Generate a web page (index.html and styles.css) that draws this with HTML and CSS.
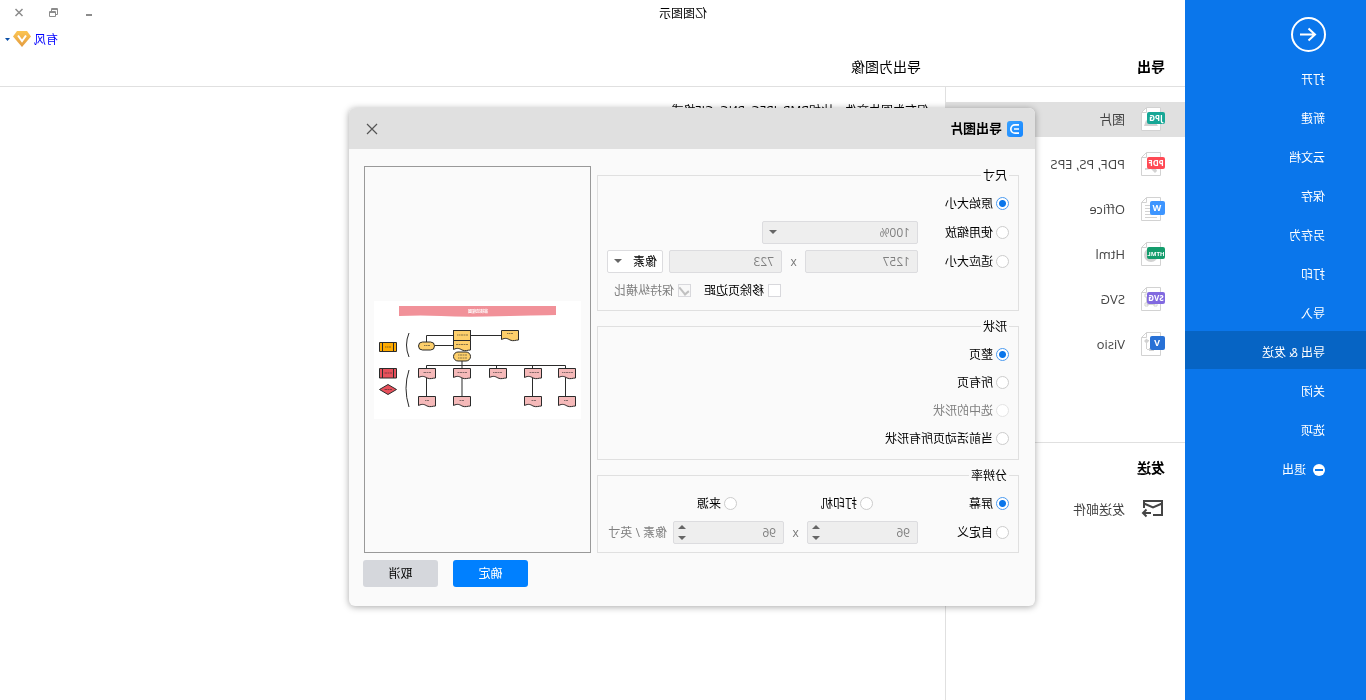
FILE: index.html
```html
<!DOCTYPE html>
<html lang="zh-CN">
<head>
<meta charset="utf-8">
<title>亿图图示</title>
<link rel="stylesheet" href="styles.css">
</head>
<body>
<svg class="defs" width="0" height="0" aria-hidden="true">
  <defs>
    <g id="page"><path d="M4.500 .5H18.500L23.500 5.500V23.500H4.500Z" fill="#fff" stroke="#d2d2d2"/><path d="M18.500 .5V5.500H23.500" fill="none" stroke="#d2d2d2"/></g>
    <path id="doc" d="M0 0H17V9C13 7 11 8 8.500 9.500C5 11 3 9.500 0 9.500Z" stroke="#2b2b2b"/>
  </defs>
</svg>
<div class="app">
  <header class="titlebar">
    <h1 class="app-title">亿图图示</h1>
    <div class="window-buttons">
      <button type="button" aria-label="最小化"><svg width="10" height="10"><path d="M2 7H8" stroke="#8c8c8c" stroke-width="2"/></svg></button>
      <button type="button" aria-label="还原"><svg width="10" height="10" fill="none" stroke="#8c8c8c"><path d="M7.500 3V.5H1.500V6.500H3M1 1.500H8"/><path d="M3.500 3.500H9.500V8.500H3.500ZM3 4.500H9"/></svg></button>
      <button type="button" aria-label="关闭"><svg width="10" height="10"><path d="M1.500 1L8.500 8M8.500 1L1.500 8" stroke="#8c8c8c" stroke-width="1.500"/></svg></button>
    </div>
  </header>

  <nav class="sidebar">
    <button class="back" type="button" aria-label="返回"><svg width="35" height="35" fill="none" stroke="#fff" stroke-width="2"><circle cx="17.500" cy="17.500" r="16.500"/><path d="M26 17.500H10.500M17.500 11.500L11 17.500L17.500 23.500"/></svg></button>
    <a class="nav-item" href="#">打开</a>
    <a class="nav-item" href="#">新建</a>
    <a class="nav-item" href="#">云文档</a>
    <a class="nav-item" href="#">保存</a>
    <a class="nav-item" href="#">另存为</a>
    <a class="nav-item" href="#">打印</a>
    <a class="nav-item" href="#">导入</a>
    <a class="nav-item active" href="#">导出 &amp; 发送</a>
    <a class="nav-item" href="#">关闭</a>
    <a class="nav-item" href="#">选项</a>
    <a class="nav-item" href="#"><svg width="12" height="12"><circle cx="6" cy="6" r="6" fill="#fff"/><path d="M2 6H10" stroke="#0a76eb" stroke-width="2"/></svg>退出</a>
  </nav>

  <div class="workspace">
    <div class="account">
      <a href="#">有风</a>
      <svg width="18" height="16"><defs><linearGradient id="gold" x2="0" y2="1"><stop stop-color="#fcc552"/><stop offset="1" stop-color="#e29a3f"/></linearGradient></defs><path d="M4 0H14L18 5.500L9 16L0 5.500Z" fill="url(#gold)"/><path d="M5 4.500L9 10L13 4.500" fill="none" stroke="#fff" stroke-width="2"/></svg>
      <svg width="5" height="3"><path d="M0 0H5L2.500 3Z" fill="#0b4fa8"/></svg>
    </div>
    <div class="headings">
      <h2 class="strong">导出</h2>
      <h2>导出为图像</h2>
    </div>
    <div class="columns">
      <aside class="formats">
        <ul class="format-list">
          <li class="format selected"><svg width="24" height="24"><use href="#page"/><path d="M7 19L11 13L15 16L19 13L21 19Z" fill="#d2d2d2"/><rect y="5" width="18" height="12" rx="2" fill="#17a796"/><text x="9" y="14" class="badge">JPG</text></svg>图片</li>
          <li class="format"><svg width="24" height="24"><use href="#page"/><path d="M8 19Q9 15 14 16L20 16L20 18L14 17L10 21Z" fill="#d2d2d2"/><rect y="5" width="18" height="12" rx="2" fill="#ff4a55"/><text x="9" y="14" class="badge">PDF</text></svg>PDF, PS, EPS</li>
          <li class="format"><svg width="24" height="24"><use href="#page"/><path d="M13 8.500H20M13 11.500H20M13 14.500H20M8 17.500H20M8 20.500H20" stroke="#d2d2d2"/><rect y="4" width="15" height="14" rx="2" fill="#3d95ff"/><text x="8" y="14" class="badge big">W</text></svg>Office</li>
          <li class="format"><svg width="24" height="24"><use href="#page"/><circle cx="14" cy="13" r="7" fill="#d2d2d2"/><rect y="5" width="18" height="12" rx="2" fill="#149c6c"/><text x="9" y="14" class="badge small">HTML</text></svg>Html</li>
          <li class="format"><svg width="24" height="24"><use href="#page"/><path d="M9.500 17.500H18.500M8 16H11V19H8ZM17 16H20V19H17ZM17 7H20V10H17Z M18.500 10V16" fill="none" stroke="#d2d2d2"/><rect y="5" width="18" height="12" rx="2" fill="#8169e0"/><text x="9" y="14" class="badge">SVG</text></svg>SVG</li>
          <li class="format"><svg width="24" height="24"><use href="#page"/><path d="M16 8.500H20M18.500 8V17M14 17.500H18" fill="none" stroke="#d2d2d2"/><path d="M16 9L18.500 6.500L21 9L18.500 11.500ZM11 16H16V19H11Z" fill="#d2d2d2"/><rect y="4" width="15" height="14" rx="2" fill="#2871d6"/><text x="8" y="14" class="badge big">V</text></svg>Visio</li>
        </ul>
        <section class="send">
          <h2 class="strong">发送</h2>
          <div class="format"><svg width="24" height="24" fill="none" stroke="#444" stroke-width="2"><path d="M12 18H3V4H21V11"/><path d="M3 6.500L12 10.500L21 6.500"/><path d="M14 16H21M18.500 12.500L22 16L18.500 19.500"/></svg>发送邮件</div>
        </section>
      </aside>
      <main class="content">
        <p>保存为图片文件，比如BMP, JPEG, PNG, GIF格式</p>
      </main>
    </div>
  </div>

  <form class="dialog" role="dialog" aria-labelledby="dialog-title">
    <div class="dialog-bar">
      <svg width="16" height="16"><defs><linearGradient id="blue" x1="1" y2="1" x2="0"><stop stop-color="#38a1ff"/><stop offset="1" stop-color="#1686ff"/></linearGradient></defs><rect width="16" height="16" rx="3" fill="url(#blue)"/><path d="M4 3.800H8A4.200 4.200 0 0 1 8 12.200H4M4 8H9" fill="none" stroke="#fff" stroke-width="1.700"/></svg>
      <h2 id="dialog-title">导出图片</h2>
      <button class="close" type="button" aria-label="关闭"><svg width="12" height="12"><path d="M1 1L11 11M11 1L1 11" stroke="#555" stroke-width="1.200"/></svg></button>
    </div>
    <div class="dialog-body">
      <div class="settings">
        <fieldset class="size">
          <legend>尺寸</legend>
          <div class="row"><label class="option"><input type="radio" name="size" checked>原始大小</label></div>
          <div class="row">
            <label class="option"><input type="radio" name="size">使用缩放</label>
            <span class="drop scale"><select disabled aria-label="缩放比例"><option>100%</option></select></span>
          </div>
          <div class="row">
            <label class="option"><input type="radio" name="size">适应大小</label>
            <input class="field" type="text" value="1257" disabled aria-label="宽度">
            <span class="times">x</span>
            <input class="field" type="text" value="723" disabled aria-label="高度">
            <span class="drop unit"><select aria-label="单位"><option>像素</option></select></span>
          </div>
          <div class="row checks">
            <label><input type="checkbox">移除页边距</label>
            <label class="muted"><input type="checkbox" checked disabled>保持纵横比</label>
          </div>
        </fieldset>
        <fieldset class="shapes">
          <legend>形状</legend>
          <label class="option"><input type="radio" name="shape" checked>整页</label>
          <label class="option"><input type="radio" name="shape">所有页</label>
          <label class="option muted"><input type="radio" name="shape" disabled>选中的形状</label>
          <label class="option"><input type="radio" name="shape">当前活动页所有形状</label>
        </fieldset>
        <fieldset class="size">
          <legend>分辨率</legend>
          <div class="row devices">
            <label class="option"><input type="radio" name="dpi" checked>屏幕</label>
            <label class="option"><input type="radio" name="dpi">打印机</label>
            <label class="option"><input type="radio" name="dpi">来源</label>
          </div>
          <div class="row">
            <label class="option"><input type="radio" name="dpi">自定义</label>
            <span class="spin"><input class="field" type="text" value="96" disabled aria-label="水平分辨率"></span>
            <span class="times">x</span>
            <span class="spin"><input class="field" type="text" value="96" disabled aria-label="垂直分辨率"></span>
            <span class="muted per-inch">像素 / 英寸</span>
          </div>
        </fieldset>
      </div>
      <div class="preview">
        <svg class="diagram" viewBox="0 0 207 118" role="img" aria-label="预览">
          <rect width="207" height="118" fill="#fff"/>
          <path d="M25 5H182V15Q160 14 140 15T95 15.500T50 14.500T25 14Z" fill="#f19199"/>
          <text x="103" y="12" class="banner-text">审核流程图</text>
          <g fill="none" stroke="#2b2b2b">
            <path d="M79 34.500H154.500V41M128 44.500H146M119 60V67M15.500 67V64.500H154.500V67M84.500 64.500V67M48.500 64.500V67"/>
            <path d="M15.500 76V95M48.500 76V95M119 76V95M154.500 76V95"/>
            <path d="M172 32Q177 44 172 56M172 69Q178 87 172 106"/>
          </g>
          <g fill="#fdcf6b" stroke="#2b2b2b">
            <rect x="110.500" y="29.500" width="17" height="10"/>
            <use href="#doc" x="110.500" y="39.500"/>
            <use href="#doc" x="62.500" y="29.500"/>
            <rect x="110.500" y="51" width="17" height="9" rx="4.500"/>
            <rect x="146.500" y="41" width="16" height="8" rx="4"/>
          </g>
          <g fill="#f5b9b9">
            <use href="#doc" x="5.500" y="67.500"/><use href="#doc" x="39.500" y="67.500"/><use href="#doc" x="74.500" y="67.500"/><use href="#doc" x="110.500" y="67.500"/><use href="#doc" x="145.500" y="67.500"/>
            <use href="#doc" x="5.500" y="95.500"/><use href="#doc" x="39.500" y="95.500"/><use href="#doc" x="110.500" y="95.500"/><use href="#doc" x="145.500" y="95.500"/>
          </g>
          <path d="M184.500 41.500H201.500V50.500H184.500ZM187.500 41.500V50.500M198.500 41.500V50.500" fill="#ffab00" stroke="#2b2b2b"/>
          <path d="M184.500 67.500H201.500V77H184.500ZM187.500 67.500V77M198.500 67.500V77" fill="#e8505b" stroke="#2b2b2b"/>
          <path d="M193 83.500L201.500 88.500L193 93.500L184.500 88.500Z" fill="#e8505b" stroke="#2b2b2b"/>
          <g stroke="#2b2b2b" stroke-opacity=".55" stroke-dasharray="2 .5">
            <path d="M113 34H124M113 43.500H125M68 32.500H74M114 54H123M114 57H123M151 44.500H157M190 46H196M189 72H197M189 88.500H197"/>
            <path d="M8 71.500H19M42 71.500H52M79 71.500H88M114 71.500H124M150 71.500H158M13 99.500H17M45 99.500H50M117 99.500H122M152 99.500H156"/>
          </g>
        </svg>
      </div>
    </div>
    <div class="dialog-actions">
      <button class="btn primary" type="submit">确定</button>
      <button class="btn" type="button">取消</button>
    </div>
  </form>
</div>
</body>
</html>
```
FILE: styles.css
```css
* { box-sizing: border-box; }

body {
  margin: 0;
  background: #fff;
  color: #000;
  font: 12px/17px "Open Sans", "Noto Sans CJK SC", sans-serif;
}

button, input, select { font: inherit; color: inherit; }
button { border: 0; padding: 0; background: none; }
h1, h2, p, ul { margin: 0; padding: 0; font-size: inherit; font-weight: 400; }
svg { display: block; flex: none; }
.defs { position: absolute; }

/* The whole window is shown flipped left to right. */
.app {
  position: relative;
  display: grid;
  grid-template: 26px 1fr / 181px 1fr;
  min-height: 100vh;
  transform: scaleX(-1);
}

.titlebar {
  grid-area: 1 / 1 / 2 / 3;
  display: grid;
  grid-template-columns: 1fr auto 1fr;
  align-items: center;
  z-index: 1;
}
.app-title { grid-column: 2; }
.window-buttons {
  display: flex;
  justify-content: flex-end;
  gap: 25px;
  padding-right: 14px;
}

.sidebar {
  grid-area: 1 / 1 / 3 / 2;
  display: flex;
  flex-direction: column;
  gap: 1px;
  padding-top: 17px;
  background: #0a76eb;
  color: #fff;
}
.back { align-self: flex-start; margin: 0 0 5px 40px; }
.nav-item {
  display: flex;
  align-items: center;
  gap: 7px;
  height: 38px;
  padding: 5px 0 0 41px;
  color: #fff;
  text-decoration: none;
}
.nav-item.active { background: #0664c4; }

.workspace {
  grid-area: 2 / 2 / 3 / 3;
  display: flex;
  flex-direction: column;
}
.account {
  display: flex;
  align-items: center;
  justify-content: flex-end;
  gap: 3px;
  height: 26px;
  padding-right: 5px;
}
.account a { color: #00f; text-decoration: none; }
.headings {
  display: grid;
  grid-template-columns: 240px 1fr;
  align-items: center;
  height: 35px;
  padding-bottom: 6px;
  border-bottom: 1px solid #e0e0e0;
  font-size: 14px;
}
.headings h2 { padding-left: 20px; }
.headings h2 + h2 { padding-left: 24px; }
.strong { font-weight: 700; }

.columns {
  flex: 1;
  display: grid;
  grid-template-columns: 240px 1fr;
}
.formats {
  padding-top: 15px;
  border-right: 1px solid #e0e0e0;
  font-size: 13px;
  color: #444;
}
.format-list {
  display: flex;
  flex-direction: column;
  gap: 10px;
  list-style: none;
}
.format {
  display: flex;
  align-items: center;
  gap: 16px;
  height: 35px;
  padding: 0 0 1px 20px;
}
.format.selected { background: #e0e0e0; }
.badge {
  fill: #fff;
  font: 700 8px "Open Sans", sans-serif;
  text-anchor: middle;
}
.badge.small { font-size: 6px; }
.badge.big { font-size: 9px; }
.send {
  margin-top: 80px;
  padding-top: 16px;
  border-top: 1px solid #e0e0e0;
}
.send h2 { padding-left: 20px; font-size: 14px; color: #000; }
.send .format { margin-top: 16px; }
.content { padding: 15px 16px; }

.dialog {
  position: absolute;
  top: 108px;
  left: 331px;
  width: 686px;
  max-width: calc(100% - 331px);
  border-radius: 6px;
  background: #fafafa;
  box-shadow: 0 1px 7px rgba(0, 0, 0, .35);
  z-index: 2;
}
.dialog-bar {
  display: flex;
  align-items: center;
  gap: 5px;
  height: 41px;
  padding: 0 17px 0 12px;
  border-radius: 6px 6px 0 0;
  background: #e0e0e0;
}
.dialog-bar h2 { font-size: 13px; font-weight: 700; }
.close { margin-left: auto; }
.dialog-body {
  display: grid;
  grid-template-columns: 1fr 227px;
  gap: 6px;
  padding: 17px 15px 0 16px;
  padding-right: 15px;
}
.settings {
  display: flex;
  flex-direction: column;
  gap: 7px;
  padding-top: 1px;
}

fieldset {
  display: flex;
  flex-direction: column;
  margin: 0;
  min-width: 0;
  border: 1px solid #e0e0e0;
}
legend { height: 17px; padding: 0 2px; }
.size { gap: 6px; padding: 8px 9px; }
.shapes { gap: 10px; padding: 10px 9px 12px; }
.row { display: flex; align-items: center; height: 23px; }
.option { display: flex; align-items: center; gap: 3px; height: 18px; }
.row > .option { flex: none; width: 91px; }
.devices > .option { width: 136px; }
.muted { color: #808080; }

input[type="radio"] {
  appearance: none;
  width: 13px;
  height: 13px;
  margin: 0;
  border: 1px solid #ccc;
  border-radius: 50%;
  background: #fff;
}
input[type="radio"]:checked {
  border-color: #4a9af0;
  background: radial-gradient(circle, #0a76eb 3px, #fff 4px);
}
input[type="radio"]:disabled { border-color: #e4e4e4; }

.checks { gap: 13px; padding-left: 228px; }
.checks label { display: flex; align-items: center; gap: 4px; white-space: nowrap; }
input[type="checkbox"] {
  appearance: none;
  display: grid;
  place-items: center;
  width: 13px;
  height: 13px;
  margin: 0;
  border: 1px solid #d8d8dc;
  background: #fff;
}
input[type="checkbox"]:disabled { background: #f8f8f8; }
input[type="checkbox"]:checked::before {
  content: "";
  width: 4px;
  height: 8px;
  margin-bottom: 2px;
  border: solid #c0c0c0;
  border-width: 0 2px 2px 0;
  rotate: 40deg;
}

.field, select {
  width: 100%;
  height: 23px;
  padding: 0 7px;
  border: 1px solid #dcdcdf;
  border-radius: 2px;
  background: #fff;
}
select { appearance: none; display: block; padding: 0 5px; }
.field:disabled, select:disabled {
  background: #eee;
  color: #808080;
  opacity: 1;
}
.row > .field { flex: none; width: 113px; }
.times { flex: none; width: 23px; text-align: center; color: #777; }

.drop, .spin { position: relative; flex: none; }
.scale { width: 156px; }
.scale select { padding: 0 7px; }
.unit { width: 56px; margin-left: 6px; }
.drop::after, .spin::before, .spin::after {
  content: "";
  position: absolute;
  border: solid transparent;
  border-width: 4px 4px 0;
  border-top-color: #666;
}
.drop::after { top: 9px; right: 7px; }
.spin { width: 111px; }
.spin::before { top: 4px; right: 5px; border-width: 0 4px 4px; border-bottom-color: #666; }
.spin::after { top: 15px; right: 5px; }
.per-inch { padding-left: 6px; white-space: nowrap; }

/* The settings column is 422px wide beside the preview. */
.dialog-body { grid-template-columns: minmax(0, 422px) 227px; }

.preview {
  display: flex;
  align-items: center;
  padding: 0 9px;
  border: 1px solid #999;
}
.diagram { width: 100%; }
.banner-text {
  fill: #fff;
  font: 700 4px "Noto Sans CJK SC", sans-serif;
  text-anchor: middle;
}

.dialog-actions {
  display: flex;
  justify-content: flex-end;
  gap: 15px;
  padding: 7px 14px 19px;
}
.btn {
  width: 75px;
  height: 27px;
  border-radius: 3px;
  background: #d5d7dc;
}
.btn.primary { background: #0080ff; color: #fff; }
```
